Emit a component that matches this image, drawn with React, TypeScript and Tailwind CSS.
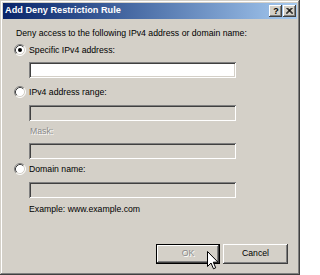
const font = { fontFamily: '"Liberation Sans", Arial, sans-serif' };

function Radio({ checked }: { checked?: boolean }) {
  return (
    <svg width="12" height="12" viewBox="0 0 12 12" className="shrink-0">
      <circle cx="6" cy="6" r="5" fill="#ffffff" />
      <path d="M2.11 9.89 A5.5 5.5 0 0 1 9.89 2.11" fill="none" stroke="#808080" strokeWidth="1" />
      <path d="M9.89 2.11 A5.5 5.5 0 0 1 2.11 9.89" fill="none" stroke="#ffffff" strokeWidth="1" />
      <path d="M2.82 9.18 A4.5 4.5 0 0 1 9.18 2.82" fill="none" stroke="#404040" strokeWidth="1" />
      <path d="M9.18 2.82 A4.5 4.5 0 0 1 2.82 9.18" fill="none" stroke="#d4d0c8" strokeWidth="1" />
      {checked && <circle cx="6" cy="6" r="2" fill="#000000" />}
    </svg>
  );
}

function Field({ disabled }: { disabled?: boolean }) {
  return (
    <div
      className={`ml-[15px] w-[207px] h-[16px] shadow-[inset_1px_1px_#808080,inset_-1px_-1px_#ffffff,inset_2px_2px_#404040,inset_-2px_-2px_#d4d0c8] ${
        disabled ? "bg-[#d4d0c8]" : "bg-white"
      }`}
    />
  );
}

function Option({ label, checked }: { label: string; checked?: boolean }) {
  return (
    <div className="flex items-center gap-[3px] h-[12px]">
      <Radio checked={checked} />
      <span className="text-[8.7px] leading-[12px] text-black">{label}</span>
    </div>
  );
}

const raised =
  "shadow-[inset_-1px_-1px_#404040,inset_1px_1px_#ffffff,inset_-2px_-2px_#808080,inset_2px_2px_#d4d0c8]";

export default function App() {
  return (
    <div
      style={font}
      className="relative w-[300px] h-[275px] bg-[#d4d0c8] p-[3px] shadow-[inset_-1px_-1px_#404040,inset_1px_1px_#d4d0c8,inset_-2px_-2px_#808080,inset_2px_2px_#ffffff] select-none"
    >
      {/* Title bar */}
      <div className="h-[16px] flex items-center justify-between bg-linear-to-r from-[#0a246a] to-[#a6caf0] pl-[2px] pr-[1px]">
        <span className="text-[9.2px] font-bold text-white leading-none">Add Deny Restriction Rule</span>
        <div className="flex gap-[1px]">
          <div className={`w-[13px] h-[12px] bg-[#d4d0c8] ${raised} flex items-center justify-center`}>
            <span className="text-[9px] font-bold leading-none text-black pl-[1px]">?</span>
          </div>
          <div className={`w-[13px] h-[12px] bg-[#d4d0c8] ${raised} flex items-center justify-center`}>
            <svg width="7" height="6" viewBox="0 0 7 6">
              <path d="M0.5 0 L6.5 6 M1.5 0 L7 5.5 M6.5 0 L0.5 6 M5.5 0 L0 5.5" stroke="#000" strokeWidth="1" fill="none" />
            </svg>
          </div>
        </div>
      </div>

      {/* Body */}
      <div className="flex flex-col pl-[11px] pr-[9px]">
        <div className="mt-[8px] ml-[2px] h-[12px] text-[8.7px] leading-[12px] text-black">
          Deny access to the following IPv4 address or domain name:
        </div>

        <div className="mt-[5px]">
          <Option label="Specific IPv4 address:" checked />
        </div>
        <div className="mt-[6px]">
          <Field />
        </div>

        <div className="mt-[8px]">
          <Option label="IPv4 address range:" />
        </div>
        <div className="mt-[7px]">
          <Field disabled />
        </div>
        <div className="mt-[4px] ml-[16px] h-[12px] text-[8.7px] leading-[12px] text-[#8a8a8a] [text-shadow:1px_1px_0_#ffffff]">
          Mask:
        </div>
        <div className="mt-[6px]">
          <Field disabled />
        </div>

        <div className="mt-[4px]">
          <Option label="Domain name:" />
        </div>
        <div className="mt-[7px]">
          <Field disabled />
        </div>
        <div className="mt-[5px] ml-[15px] h-[12px] text-[8.7px] leading-[12px] text-black">
          Example: www.example.com
        </div>

        <div className="mt-[29px] flex justify-end gap-[3px]">
          <div className="w-[64px] h-[20px] border border-black">
            <div className={`w-full h-full bg-[#d4d0c8] ${raised} flex items-center justify-center`}>
              <span className="text-[8.7px] text-[#8a8a8a] [text-shadow:1px_1px_0_#ffffff]">OK</span>
            </div>
          </div>
          <div className={`w-[65px] h-[20px] bg-[#d4d0c8] ${raised} flex items-center justify-center`}>
            <span className="text-[8.7px] text-black">Cancel</span>
          </div>
        </div>
      </div>

      {/* Mouse pointer */}
      <svg
        width="12"
        height="19"
        viewBox="0 0 12 19"
        className="absolute left-[207px] top-[251px] pointer-events-none"
      >
        <path d="M0.5 0.5 L0.5 15.5 L4 12 L6.5 17.8 L8.7 16.8 L6.3 11.2 L11 11.2 Z" fill="#ffffff" stroke="#000000" strokeWidth="1" strokeLinejoin="miter" />
      </svg>
    </div>
  );
}
